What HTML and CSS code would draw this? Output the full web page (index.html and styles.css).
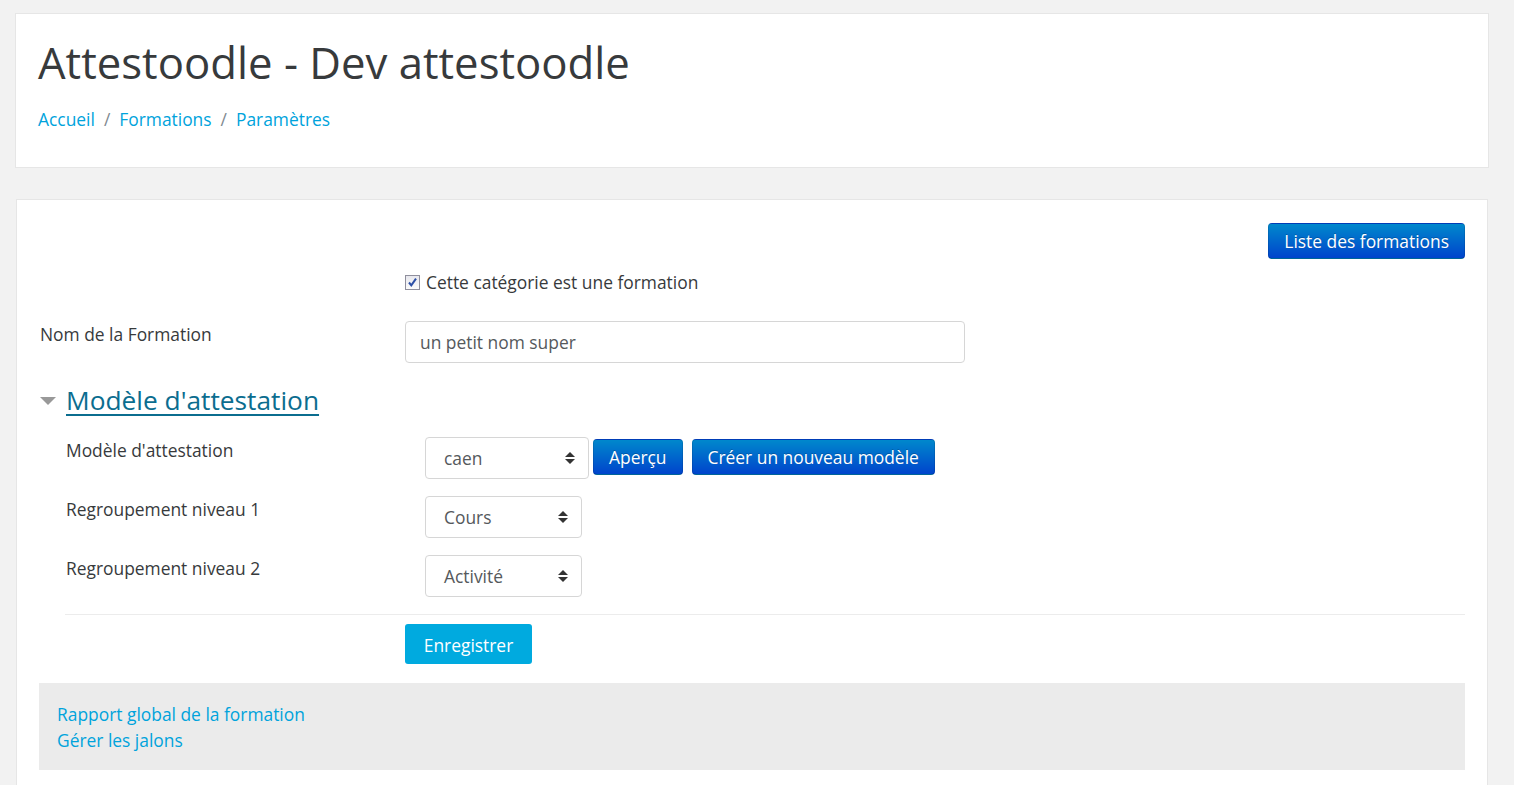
FILE: index.html
```html
<!DOCTYPE html>
<html lang="fr">
<head>
<meta charset="utf-8">
<title>Attestoodle - Dev attestoodle</title>
<link rel="stylesheet" href="styles.css">
</head>
<body>
<div class="page">
  <header class="card page-header">
    <h1 class="page-title">Attestoodle - Dev attestoodle</h1>
    <nav class="breadcrumb">
      <a href="#">Accueil</a><span class="sep">/</span><a href="#">Formations</a><span class="sep">/</span><a href="#">Paramètres</a>
    </nav>
  </header>

  <main class="card main">
    <div class="toolbar">
      <a class="btn btn-primary" href="#">Liste des formations</a>
    </div>

    <form class="mform">
      <div class="form-row form-row-check">
        <div class="form-label"></div>
        <div class="form-control-col">
          <label class="check">
            <span class="checkbox">
              <svg viewBox="0 0 13 13" width="13" height="13"><path d="M3 6.5l2.3 2.8L10 2.6" fill="none" stroke="#2c4fa6" stroke-width="2"/></svg>
            </span>
            Cette catégorie est une formation
          </label>
        </div>
      </div>

      <div class="form-row">
        <label class="form-label">Nom de la Formation</label>
        <div class="form-control-col">
          <div class="text-input">un petit nom super</div>
        </div>
      </div>

      <fieldset class="fieldset">
        <legend class="legend">
          <span class="caret"></span><a href="#">Modèle d'attestation</a>
        </legend>

        <div class="form-row form-row-inner">
          <label class="form-label">Modèle d'attestation</label>
          <div class="form-control-col inline">
            <div class="select select-wide">caen<span class="arrows"></span></div>
            <a class="btn btn-primary btn-sm" href="#">Aperçu</a>
            <a class="btn btn-primary btn-sm btn-gap" href="#">Créer un nouveau modèle</a>
          </div>
        </div>

        <div class="form-row form-row-inner">
          <label class="form-label">Regroupement niveau 1</label>
          <div class="form-control-col">
            <div class="select">Cours<span class="arrows"></span></div>
          </div>
        </div>

        <div class="form-row form-row-inner">
          <label class="form-label">Regroupement niveau 2</label>
          <div class="form-control-col">
            <div class="select">Activité<span class="arrows"></span></div>
          </div>
        </div>
      </fieldset>

      <div class="form-row form-actions">
        <div class="form-label"></div>
        <div class="form-control-col">
          <a class="btn btn-save" href="#">Enregistrer</a>
        </div>
      </div>
    </form>

    <div class="links-box">
      <a href="#">Rapport global de la formation</a>
      <a href="#">Gérer les jalons</a>
    </div>
  </main>
</div>
</body>
</html>
```

FILE: styles.css
```css
* { box-sizing: border-box; }

html, body {
  margin: 0;
  padding: 0;
}

body {
  background: #f2f2f2;
  font-family: "Open Sans", "Liberation Sans", sans-serif;
  font-size: 17.4px;
  color: #373a3c;
  height: 785px;
  overflow: hidden;
}

a {
  color: #00a3dc;
  text-decoration: none;
}

.page {
  padding: 13px 25px 0 15px;
}

.card {
  background: #fff;
  border: 1px solid #e6e6e6;
}

/* ---- header ---- */
.page-header {
  height: 155px;
  padding: 22px 22px 0 22px;
}

.page-title {
  margin: 0;
  font-size: 43.7px;
  font-weight: 400;
  line-height: 52px;
  color: #373a3c;
}

.breadcrumb {
  margin-top: 19px;
  font-size: 17.4px;
  line-height: 24px;
}

.breadcrumb .sep {
  color: #818a91;
  padding: 0 9px;
}

/* ---- main card ---- */
.main {
  margin: 31px 1px 0 1px;
  padding: 23px 22px 30px 22px;
  min-height: 600px;
}

.toolbar {
  display: flex;
  justify-content: flex-end;
  height: 36px;
}

.btn {
  display: inline-flex;
  align-items: center;
  justify-content: center;
  height: 36px;
  padding: 2px 15px 0;
  border-radius: 4px;
  font-size: 17.4px;
  line-height: 1;
  color: #fff;
  white-space: nowrap;
}

.btn-primary {
  background: linear-gradient(to bottom, #0088cc, #0044cc);
  border: 1px solid;
  border-color: rgba(0,0,0,.1) rgba(0,0,0,.1) rgba(0,0,0,.25);
  text-shadow: 0 -1px 0 rgba(0,0,0,.2);
}

.btn-sm {
  margin-top: 2px;
}

.btn-gap {
  margin-left: 5px;
}

.btn-save {
  background: #00aadf;
  height: 40px;
  padding: 3px 18px 0;
  border-radius: 3px;
  min-width: 127px;
}

/* ---- form ---- */
.mform {
  margin-top: 11px;
}

.form-row {
  display: grid;
  grid-template-columns: 366px 1fr;
  margin-bottom: 17px;
}

.form-label {
  padding-top: 1px;
  line-height: 24px;
  padding-left: 1px;
}

.form-control-col.inline {
  display: flex;
  align-items: flex-start;
  gap: 4px;
}

.check {
  display: flex;
  align-items: center;
  line-height: 24px;
  gap: 6px;
}

.checkbox {
  width: 15px;
  height: 15px;
  border: 1px solid #8f8f9d;
  background: linear-gradient(#e8e8ee, #fafafa);
  display: inline-flex;
  align-items: center;
  justify-content: center;
}

.form-row-check {
  margin-bottom: 27px;
}

.text-input {
  width: 560px;
  height: 42px;
  border: 1px solid #d6d6d6;
  border-radius: 4px;
  padding: 0 14px;
  display: flex;
  align-items: center;
  color: #55595c;
}

/* ---- fieldset ---- */
.fieldset {
  border: 0;
  margin: 0;
  padding: 0 0 0 27px;
}

.legend {
  display: flex;
  align-items: center;
  padding: 0;
  margin: 4px 0 17px -26px;
  font-size: 26.3px;
  line-height: 40px;
}

.legend a {
  color: #0b6d8f;
  text-decoration: underline;
  text-decoration-thickness: 2px;
  text-underline-offset: 4px;
}

.caret {
  width: 0;
  height: 0;
  border-left: 8px solid transparent;
  border-right: 8px solid transparent;
  border-top: 8px solid #999;
  margin-right: 10px;
  margin-top: 2px;
}

.form-row-inner {
  grid-template-columns: 359px 1fr;
  margin-bottom: 17px;
}

.form-row-inner .form-label {
  padding-top: 0;
  padding-left: 0;
  line-height: 26px;
}

.select {
  position: relative;
  width: 157px;
  height: 42px;
  border: 1px solid #d6d6d6;
  border-radius: 4px;
  padding: 0 18px;
  display: flex;
  align-items: center;
  color: #55595c;
}

.select-wide {
  width: 164px;
}

.arrows {
  position: absolute;
  right: 13px;
  top: 14px;
  width: 10px;
  height: 12px;
}

.arrows::before,
.arrows::after {
  content: "";
  position: absolute;
  left: 0;
  border-left: 5px solid transparent;
  border-right: 5px solid transparent;
}

.arrows::before {
  top: 0;
  border-bottom: 5px solid #333;
}

.arrows::after {
  bottom: 0;
  border-top: 5px solid #333;
}

.form-actions {
  border-top: 1px solid #ececec;
  margin-left: 26px;
  grid-template-columns: 340px 1fr;
  padding-top: 9px;
  margin-bottom: 19px;
  margin-top: 0;
}

/* ---- bottom links ---- */
.links-box {
  background: #ebebeb;
  padding: 18px 18px 17px;
  display: flex;
  flex-direction: column;
  line-height: 26px;
}
```
